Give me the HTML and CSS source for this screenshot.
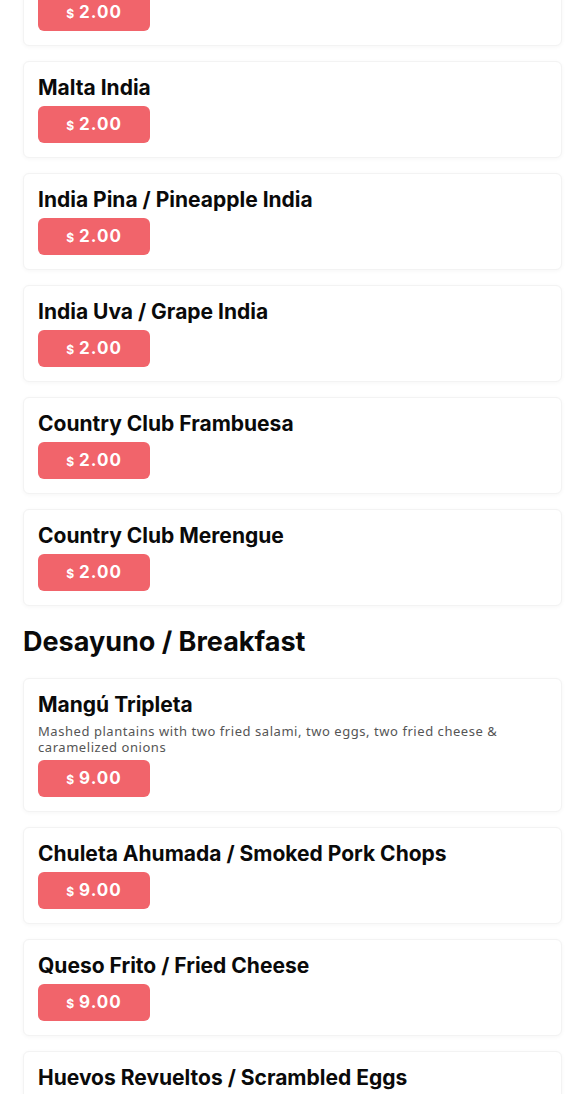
FILE: index.html
```html
<!DOCTYPE html>
<html lang="es">
<head>
    <meta charset="UTF-8">
    <title>Menú</title>
    <link rel="stylesheet" href="styles.css">
</head>
<body>
    <div class="menu">
        <div class="item_list first">
            <div class="item">
                <h3>Malta Morena</h3>
                <div class="price"><span class="cur">$</span> 2.00</div>
            </div>
            <div class="item">
                <h3>Malta India</h3>
                <div class="price"><span class="cur">$</span> 2.00</div>
            </div>
            <div class="item">
                <h3>India Pina / Pineapple India</h3>
                <div class="price"><span class="cur">$</span> 2.00</div>
            </div>
            <div class="item">
                <h3>India Uva / Grape India</h3>
                <div class="price"><span class="cur">$</span> 2.00</div>
            </div>
            <div class="item">
                <h3>Country Club Frambuesa</h3>
                <div class="price"><span class="cur">$</span> 2.00</div>
            </div>
            <div class="item">
                <h3>Country Club Merengue</h3>
                <div class="price"><span class="cur">$</span> 2.00</div>
            </div>
        </div>

        <h2 class="section_title">Desayuno / Breakfast</h2>
        <div class="item_list">
            <div class="item">
                <h3>Mangú Tripleta</h3>
                <p class="desc">Mashed plantains with two fried salami, two eggs, two fried cheese &amp; caramelized onions</p>
                <div class="price"><span class="cur">$</span> 9.00</div>
            </div>
            <div class="item">
                <h3>Chuleta Ahumada / Smoked Pork Chops</h3>
                <div class="price"><span class="cur">$</span> 9.00</div>
            </div>
            <div class="item">
                <h3>Queso Frito / Fried Cheese</h3>
                <div class="price"><span class="cur">$</span> 9.00</div>
            </div>
            <div class="item">
                <h3>Huevos Revueltos / Scrambled Eggs</h3>
                <div class="price"><span class="cur">$</span> 9.00</div>
            </div>
        </div>
    </div>
</body>
</html>
```

FILE: styles.css
```css
body {
    font-family: 'Inter', sans-serif;
    margin: 0;
    padding: 0;
    background-color: #ffffff;
    color: #0a0a0a;
}

.menu {
    padding: 0 23px;
}

.item_list {
    display: flex;
    flex-direction: column;
    gap: 15px;
}

/* страница прокручена: первая карточка уходит за верх */
.item_list.first {
    margin-top: -51px;
}

.item {
    padding: 14px;
    border: 1px solid #f3f3f3;
    border-radius: 6px;
    box-shadow: 0 1px 4px rgba(0, 0, 0, 0.04);
    background-color: #ffffff;
}

.item h3 {
    margin: 0 0 6px;
    font-size: 21px;
    line-height: 24px;
    font-weight: 700;
    color: #0a0a0a;
}

.desc {
    margin: -6px 0 5px;
    padding-top: 6px;
    font-family: 'Noto Sans', sans-serif;
    font-size: 13px;
    line-height: 16px;
    letter-spacing: 0.55px;
    color: #555;
}

.price {
    width: 112px;
    height: 37px;
    line-height: 37px;
    text-align: center;
    background-color: #f1646b;
    color: #ffffff;
    border-radius: 6px;
    font-size: 17px;
    font-weight: 700;
    letter-spacing: 1px;
}

.price .cur {
    font-size: 12px;
    letter-spacing: 0;
}

.section_title {
    margin: 16px 0 16px;
    font-size: 27px;
    line-height: 40px;
    font-weight: 700;
}
```
